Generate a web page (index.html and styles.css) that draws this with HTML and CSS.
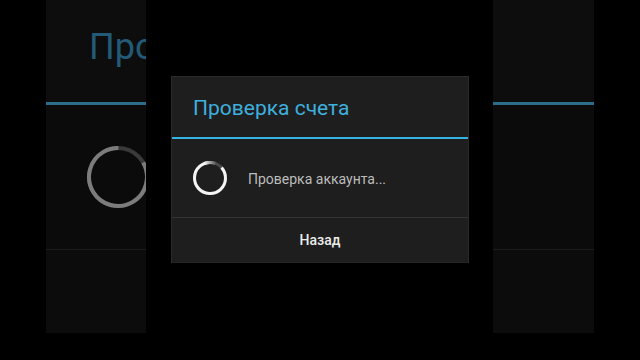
FILE: index.html
```html
<!DOCTYPE html>
<html lang="ru">
<head>
<meta charset="utf-8">
<title>Проверка счета</title>
<link rel="stylesheet" href="styles.css">
</head>
<body>
<div class="screen">
  <div class="panel panel-left">
    <div class="panel-head"><span class="panel-title">Проверка</span></div>
    <div class="panel-line"></div>
    <div class="panel-body">
      <svg class="ring" width="66" height="66" viewBox="0 0 66 66">
        <circle cx="33" cy="33" r="29" fill="none" stroke="#3a3a3a" stroke-width="4"/>
        <circle cx="33" cy="33" r="29" fill="none" stroke="#7c7c7c" stroke-width="4" stroke-dasharray="152 182" transform="rotate(-30 33 33)"/>
      </svg>
    </div>
    <div class="panel-foot"></div>
  </div>
  <div class="gap"></div>
  <div class="panel panel-right">
    <div class="panel-head"></div>
    <div class="panel-line"></div>
    <div class="panel-body"></div>
    <div class="panel-foot"></div>
  </div>
</div>

<div class="dialog">
  <div class="dialog-head"><span class="dialog-title">Проверка счета</span></div>
  <div class="dialog-line"></div>
  <div class="dialog-body">
    <svg class="spinner" width="36" height="36" viewBox="0 0 36 36">
      <defs>
        <linearGradient id="fade" x1="0" y1="0" x2="1" y2="0">
          <stop offset="0" stop-color="#f4f4f4"/>
          <stop offset="1" stop-color="#5a5a5a"/>
        </linearGradient>
      </defs>
      <circle cx="18" cy="18" r="15.5" fill="none" stroke="#4a4a4a" stroke-width="3"/>
      <circle cx="18" cy="18" r="15.5" fill="none" stroke="#f4f4f4" stroke-width="3" stroke-dasharray="84 98" transform="rotate(-42 18 18)"/>
      <path d="M12.5 3.5 A15.5 15.5 0 0 1 23.5 3.5" fill="none" stroke="url(#fade)" stroke-width="3"/>
    </svg>
    <span class="dialog-msg">Проверка аккаунта...</span>
  </div>
  <div class="dialog-btn">Назад</div>
</div>
</body>
</html>
```

FILE: styles.css
```css
html, body {
  margin: 0;
  padding: 0;
  background: #000;
  width: 640px;
  height: 360px;
  overflow: hidden;
  font-family: Roboto, "Noto Sans", "DejaVu Sans", sans-serif;
}

.screen {
  display: flex;
  margin-left: 46px;
  width: 548px;
  height: 333px;
}

.panel {
  display: flex;
  flex-direction: column;
  overflow: hidden;
  background: #0d0d0d;
}

.panel-left { width: 100px; }
.panel-right { width: 101px; }

.gap {
  width: 347px;
  background: #000;
}

.panel-head {
  height: 102px;
  display: flex;
  align-items: center;
  padding-left: 43px;
  white-space: nowrap;
}

.panel-title {
  font-size: 36px;
  color: #235a78;
  line-height: 1;
  margin-top: -8px;
}

.panel-line {
  height: 3px;
  background: #2c6c8a;
}

.panel-body {
  height: 144px;
  padding-left: 39px;
  padding-top: 39px;
  box-sizing: border-box;
  background: #0b0b0b;
}

.ring { display: block; }

.panel-foot {
  flex: 1;
  border-top: 1px solid #1b1b1b;
  background: #0c0c0c;
}

.dialog {
  position: absolute;
  left: 171px;
  top: 76px;
  width: 298px;
  height: 187px;
  box-sizing: border-box;
  background: #1e1e1e;
  border: 1px solid #2a2a2a;
  border-bottom-color: #262626;
  display: flex;
  flex-direction: column;
}

.dialog-head {
  height: 60px;
  display: flex;
  align-items: center;
  padding-left: 21px;
}

.dialog-title {
  font-size: 21px;
  color: #3eb0de;
  margin-top: 2px;
}

.dialog-line {
  height: 2px;
  background: #35b4e2;
}

.dialog-body {
  height: 78px;
  display: flex;
  align-items: center;
  padding-left: 20px;
  gap: 20px;
}

.spinner {
  display: block;
  margin-top: 0;
}

.dialog-msg {
  font-size: 14px;
  color: #bcbcbc;
  margin-top: 2px;
}

.dialog-btn {
  flex: 1;
  border-top: 1px solid #333;
  display: flex;
  align-items: center;
  justify-content: center;
  font-size: 14px;
  font-weight: 500;
  color: #ececec;
}
```
